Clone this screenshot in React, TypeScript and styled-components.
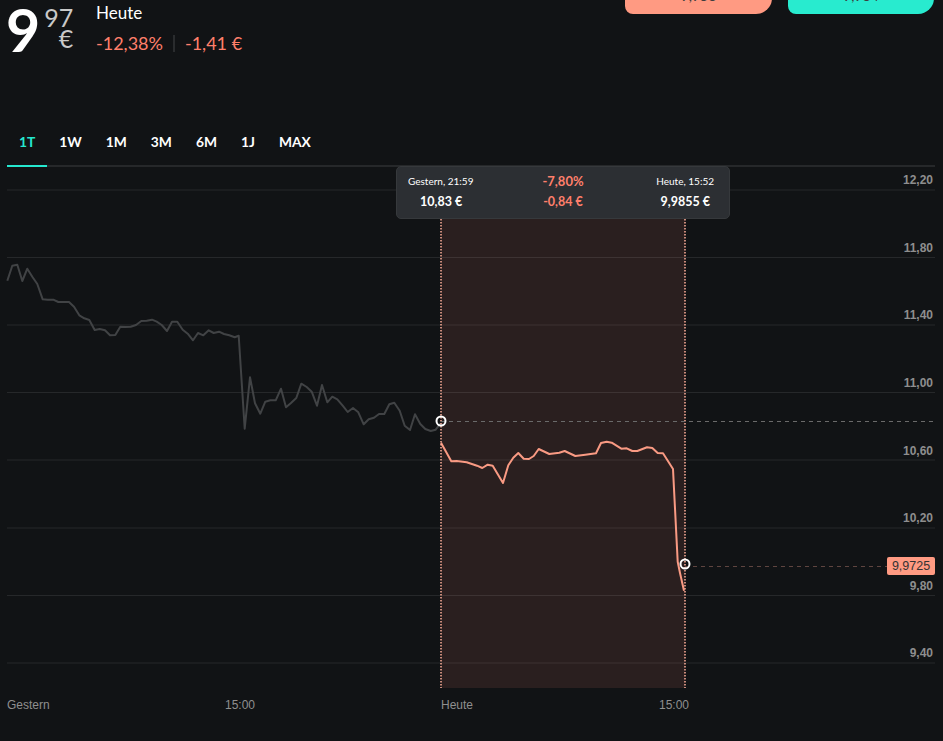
import React from "react";
import styled, {createGlobalStyle} from "styled-components";

const GREY_LINE =
  "7.3,280.7 12.3,265.7 17.3,264.7 22.3,281 27.3,268.7 32.3,276.7 37.3,284 42.7,299.3 47.7,299.7 53.3,299.7 58.3,302 63.7,302 69,302 74,306.7 79.3,315.3 84.3,318.3 89.3,320 94.7,330 99.7,329 105,330.3 110,335.3 115.3,335 120.3,326.7 125.7,327 130.7,326.7 136,325 141.3,321 146.7,320.7 152,319.7 156.7,321.7 161.7,325 167,331 172,321.7 177.3,321.7 182.7,329.7 187.7,333.7 193,340.3 198,333 203.3,335.3 208.7,330.3 213.7,333 219,331.7 224,334 229.3,335.3 234.7,337.3 238.7,335.7 244.7,428.7 250,377.3 255,403.3 260.3,413.7 265.3,401.7 270.3,400.3 275.7,400.3 281,388.7 286,407.3 291,403 296.3,398 301.3,383.7 306.7,387 311.7,391.7 317,405.7 322,385 327.3,402.3 332.3,396.7 337.3,399.3 342.7,405.7 347.7,412 353,408 358.3,412.3 363.7,424.3 368.7,419.3 374,417.7 379,414 384.3,414 389.3,404.3 394.3,402.7 399.7,410.7 404.7,425.7 410,430 415,414.3 420.3,424 425.3,429 430.7,431 435.7,429.7 440.7,423";

const RED_LINE =
  "441,442.7 451.3,461.3 456.7,461 466.7,462.3 477,465.7 482.3,468 487.7,464.7 492.7,465.7 503,483 508.3,465.3 513.3,457.7 518.3,453 523.7,458.7 529,459 533.7,456 538.7,449 549.3,454 559.3,452.7 564.7,451 575.3,456 585.3,454.7 596,453.3 601,443 606.7,441.7 611.7,442.7 621.3,448.7 626.7,448.3 632.3,451 637.3,451 647,447.3 652.3,448 657.7,453 663,453.3 673,469 677.7,561.7 680,573 684,590.7";

const GRID_LINES = [190, 257.5, 325, 392.5, 460, 528, 595.5, 663];

const PRICE_LABELS = [
  {y: 184, text: "12,20"},
  {y: 252, text: "11,80"},
  {y: 319, text: "11,40"},
  {y: 387, text: "11,00"},
  {y: 455, text: "10,60"},
  {y: 522, text: "10,20"},
  {y: 590, text: "9,80"},
  {y: 657, text: "9,40"},
];

const TIME_LABELS = [
  {x: 7, text: "Gestern"},
  {x: 225, text: "15:00"},
  {x: 441, text: "Heute"},
  {x: 659, text: "15:00"},
];

const RANGES = ["1T", "1W", "1M", "3M", "6M", "1J", "MAX"];

const App = () => {
  return (
    <Page>
      <GlobalStyle />
      <Header>
        <PriceBlock>
          <BigPrice>9</BigPrice>
          <PriceRest>
            <span>97</span>
            <span>€</span>
          </PriceRest>
        </PriceBlock>
        <Performance>
          <PeriodName>Heute</PeriodName>
          <Changes>
            <span>-12,38%</span>
            <ChangeDivider />
            <span>-1,41 €</span>
          </Changes>
        </Performance>
        <TradeButtons>
          <TradeButton $kind="sell">9,958</TradeButton>
          <TradeButton $kind="buy">9,984</TradeButton>
        </TradeButtons>
      </Header>

      <Tabs>
        {RANGES.map((range, i) => (
          <Tab key={range} $active={i === 0}>
            {range}
          </Tab>
        ))}
      </Tabs>

      <ChartArea>
        <svg width="943" height="574" viewBox="0 167 943 574">
          <rect x="441" y="167" width="244" height="521" fill="#2a1f1f" />
          {GRID_LINES.map((y) => (
            <line
              key={y}
              x1="7"
              x2="935"
              y1={y}
              y2={y}
              stroke="#fff"
              strokeOpacity="0.09"
            />
          ))}
          <polyline
            points={GREY_LINE}
            fill="none"
            stroke="#414345"
            strokeWidth="2"
            strokeLinejoin="round"
          />
          <polyline
            points={RED_LINE}
            fill="none"
            stroke="#f99a83"
            strokeWidth="2"
            strokeLinejoin="round"
          />
          <line x1="441" x2="441" y1="219" y2="688" stroke="#ffb09a" strokeWidth="1.5" strokeDasharray="1.5 1.5" />
          <line x1="685" x2="685" y1="219" y2="688" stroke="#ffb09a" strokeWidth="1.5" strokeDasharray="1.5 1.5" />
          <line x1="441" x2="935" y1="421.5" y2="421.5" stroke="#6a6a6a" strokeDasharray="4 4" />
          <line x1="685" x2="887" y1="566.5" y2="566.5" stroke="#5f4540" strokeDasharray="4 4" />
          <circle cx="441" cy="421" r="4.5" fill="none" stroke="#fff" strokeWidth="2" />
          <circle cx="685" cy="564" r="4.5" fill="none" stroke="#fff" strokeWidth="2" />
          {PRICE_LABELS.map((label) => (
            <PriceLabel key={label.text} x="933" y={label.y} textAnchor="end">
              {label.text}
            </PriceLabel>
          ))}
          {TIME_LABELS.map((label) => (
            <TimeLabel key={label.x} x={label.x} y="709">
              {label.text}
            </TimeLabel>
          ))}
        </svg>

        <RangeTooltip>
          <TooltipColumn>
            <TooltipDate>Gestern, 21:59</TooltipDate>
            <TooltipValue>10,83 €</TooltipValue>
          </TooltipColumn>
          <TooltipColumn $negative>
            <TooltipPercent>-7,80%</TooltipPercent>
            <TooltipValue>-0,84 €</TooltipValue>
          </TooltipColumn>
          <TooltipColumn>
            <TooltipDate>Heute, 15:52</TooltipDate>
            <TooltipValue>9,9855 €</TooltipValue>
          </TooltipColumn>
        </RangeTooltip>

        <PriceBadge>9,9725</PriceBadge>
      </ChartArea>
    </Page>
  );
};

const GlobalStyle = createGlobalStyle`
  html, body {
    margin: 0;
    height: 100%;
    overflow: hidden;
    background: #111315;
  }
`;

const Page = styled.div`
  width: 943px;
  height: 741px;
  overflow: hidden;
  background: #111315;
  color: #fff;
  font-family: Lato, "Noto Sans", sans-serif;
`;

const Header = styled.header`
  display: flex;
  align-items: flex-start;
  height: 125px;
  padding: 0 9px 0 6px;
`;

const PriceBlock = styled.div`
  display: flex;
  align-items: flex-start;
  width: 90px;
`;

const BigPrice = styled.div`
  font-size: 59px;
  font-weight: 700;
  line-height: 60px;
`;

const PriceRest = styled.div`
  display: flex;
  flex-direction: column;
  align-items: flex-end;
  width: 29px;
  margin: 7px 0 0 4px;
  font-size: 25px;
  line-height: 21px;
  color: #c9c9c9;
`;

const Performance = styled.div`
  display: flex;
  flex-direction: column;
  gap: 6px;
  margin-top: 1px;
`;

const PeriodName = styled.div`
  font-size: 17px;
  line-height: 24px;
`;

const Changes = styled.div`
  display: flex;
  align-items: center;
  gap: 10px;
  font-size: 18px;
  line-height: 24px;
  color: #ff7f6b;
`;

const ChangeDivider = styled.i`
  width: 2px;
  height: 17px;
  background: #2a2c2e;
`;

const TradeButtons = styled.div`
  display: flex;
  gap: 16px;
  margin-left: auto;
`;

const TradeButton = styled.button<{$kind: "sell" | "buy"}>`
  box-sizing: border-box;
  width: ${({$kind}) => ($kind === "sell" ? "147px" : "146px")};
  height: 50px;
  margin-top: -36px;
  padding: 25px 0 11px;
  border: 0;
  border-radius: 0 0 16px 8px;
  background: ${({$kind}) => ($kind === "sell" ? "#ff9a82" : "#28ebcf")};
  color: #3c3c3c;
  font-family: inherit;
  font-size: 14px;
  line-height: 14px;
  text-align: center;
`;

const Tabs = styled.nav`
  display: flex;
  height: 40px;
  margin: 0 8px 0 7px;
  border-bottom: 2px solid #26282a;
`;

const Tab = styled.div<{$active?: boolean}>`
  box-sizing: border-box;
  height: 42px;
  padding: 0 12px;
  border-bottom: 2px solid ${({$active}) => ($active ? "#25e8cf" : "transparent")};
  color: ${({$active}) => ($active ? "#25e8cf" : "#fff")};
  font-size: 13.8px;
  font-weight: 700;
  line-height: 34px;
`;

const ChartArea = styled.section`
  position: relative;
  height: 574px;

  svg {
    display: block;
  }
`;

const PriceLabel = styled.text`
  fill: #8e8e8e;
  font-family: "Liberation Sans", Arial, sans-serif;
  font-size: 12px;
  font-weight: 700;
`;

const TimeLabel = styled.text`
  fill: #8f8f8f;
  font-family: "Liberation Sans", Arial, sans-serif;
  font-size: 12px;
`;

const RangeTooltip = styled.div`
  position: absolute;
  top: -1px;
  left: 396px;
  display: grid;
  grid-template-columns: 104px 1fr 100px;
  box-sizing: border-box;
  width: 334px;
  height: 53px;
  padding: 7px 15px 0 11px;
  border: 1px solid #36393c;
  border-radius: 5px;
  background: #2c2f33;
`;

const TooltipColumn = styled.div<{$negative?: boolean}>`
  display: flex;
  flex-direction: column;
  align-items: center;
  gap: 6px;
  color: ${({$negative}) => ($negative ? "#ff7f6b" : "#fff")};

  &:first-child {
    align-items: flex-start;
  }

  &:first-child > :last-child {
    margin-left: 12px;
  }

  &:last-child {
    align-items: flex-end;
  }

  &:last-child > :last-child {
    margin-right: 4px;
  }
`;

const TooltipDate = styled.div`
  font-size: 10px;
  line-height: 14px;
`;

const TooltipPercent = styled.div`
  font-size: 13px;
  font-weight: 700;
  line-height: 14px;
`;

const TooltipValue = styled.div`
  font-size: 12.5px;
  font-weight: 700;
  line-height: 15px;
`;

const PriceBadge = styled.div`
  position: absolute;
  top: 390px;
  left: 887px;
  box-sizing: border-box;
  width: 48px;
  height: 18px;
  border-radius: 2px;
  background: #ff9a82;
  color: #333;
  font-family: "Liberation Sans", Arial, sans-serif;
  font-size: 12.5px;
  line-height: 18px;
  text-align: center;
`;

export default App;
